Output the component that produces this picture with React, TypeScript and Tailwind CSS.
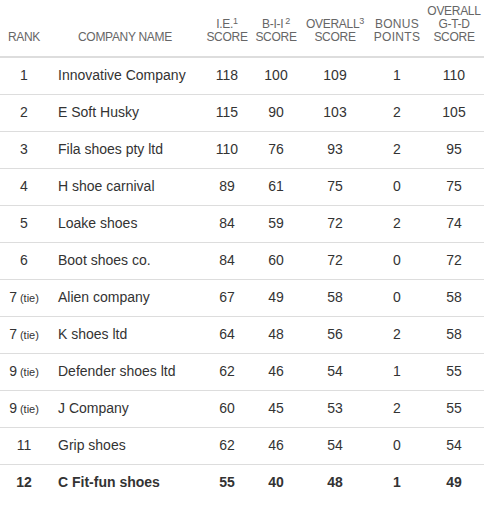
import React from "react";

type Row = { rank: string; tie?: boolean; name: string; ie: number; bii: number; overall: number; bonus: number; gtd: number };

const rows: Row[] = [
  { rank: "1", name: "Innovative Company", ie: 118, bii: 100, overall: 109, bonus: 1, gtd: 110 },
  { rank: "2", name: "E Soft Husky", ie: 115, bii: 90, overall: 103, bonus: 2, gtd: 105 },
  { rank: "3", name: "Fila shoes pty ltd", ie: 110, bii: 76, overall: 93, bonus: 2, gtd: 95 },
  { rank: "4", name: "H shoe carnival", ie: 89, bii: 61, overall: 75, bonus: 0, gtd: 75 },
  { rank: "5", name: "Loake shoes", ie: 84, bii: 59, overall: 72, bonus: 2, gtd: 74 },
  { rank: "6", name: "Boot shoes co.", ie: 84, bii: 60, overall: 72, bonus: 0, gtd: 72 },
  { rank: "7", tie: true, name: "Alien company", ie: 67, bii: 49, overall: 58, bonus: 0, gtd: 58 },
  { rank: "7", tie: true, name: "K shoes ltd", ie: 64, bii: 48, overall: 56, bonus: 2, gtd: 58 },
  { rank: "9", tie: true, name: "Defender shoes ltd", ie: 62, bii: 46, overall: 54, bonus: 1, gtd: 55 },
  { rank: "9", tie: true, name: "J Company", ie: 60, bii: 45, overall: 53, bonus: 2, gtd: 55 },
  { rank: "11", name: "Grip shoes", ie: 62, bii: 46, overall: 54, bonus: 0, gtd: 54 },
  { rank: "12", name: "C Fit-fun shoes", ie: 55, bii: 40, overall: 48, bonus: 1, gtd: 49 },
];

export default function App() {
  return (
    <div className="w-[484px] h-[512px] bg-white" style={{ fontFamily: '"Liberation Sans", Arial, sans-serif' }}>
      <table className="w-[484px] border-collapse table-fixed">
        <colgroup>
          <col className="w-[48px]" />
          <col className="w-[154px]" />
          <col className="w-[50px]" />
          <col className="w-[48px]" />
          <col className="w-[70px]" />
          <col className="w-[54px]" />
          <col className="w-[60px]" />
        </colgroup>
        <thead>
          <tr className="h-[57px] border-b-2 border-[#dddddd] text-[#666666] text-[12px] leading-[13px] uppercase">
            <th className="font-normal align-bottom pb-[12px] text-center tracking-[-0.3px]">RANK</th>
            <th className="font-normal align-bottom pb-[12px] text-center tracking-[-0.3px]">COMPANY NAME</th>
            <th className="font-normal align-bottom pb-[12px] text-center tracking-[-0.3px]">I.E.<sup className="text-[9px]">1</sup><br />SCORE</th>
            <th className="font-normal align-bottom pb-[12px] text-center tracking-[-0.3px]">B-I-I<sup className="text-[9px] ml-[2px]">2</sup><br />SCORE</th>
            <th className="font-normal align-bottom pb-[12px] text-center tracking-[-0.3px]">OVERALL<sup className="text-[9px]">3</sup><br />SCORE</th>
            <th className="font-normal align-bottom pb-[12px] text-center tracking-[0.3px]">BONUS<br />POINTS</th>
            <th className="font-normal align-bottom pb-[12px] text-center tracking-[-0.3px]">OVERALL<br />G-T-D<br />SCORE</th>
          </tr>
        </thead>
        <tbody>
          {rows.map((r, i) => {
            const last = i === rows.length - 1;
            return (
              <tr key={i} className={`h-[37px] text-[14px] text-[#333333] ${last ? "font-bold" : "border-b border-[#dddddd]"}`}>
                <td className="text-center whitespace-nowrap">
                  {r.rank}
                  {r.tie && <span className="text-[11px] ml-[3px]">(tie)</span>}
                </td>
                <td className="pl-[10px] text-left whitespace-nowrap">{r.name}</td>
                <td className="text-center">{r.ie}</td>
                <td className="text-center">{r.bii}</td>
                <td className="text-center">{r.overall}</td>
                <td className="text-center">{r.bonus}</td>
                <td className="text-center">{r.gtd}</td>
              </tr>
            );
          })}
        </tbody>
      </table>
    </div>
  );
}
